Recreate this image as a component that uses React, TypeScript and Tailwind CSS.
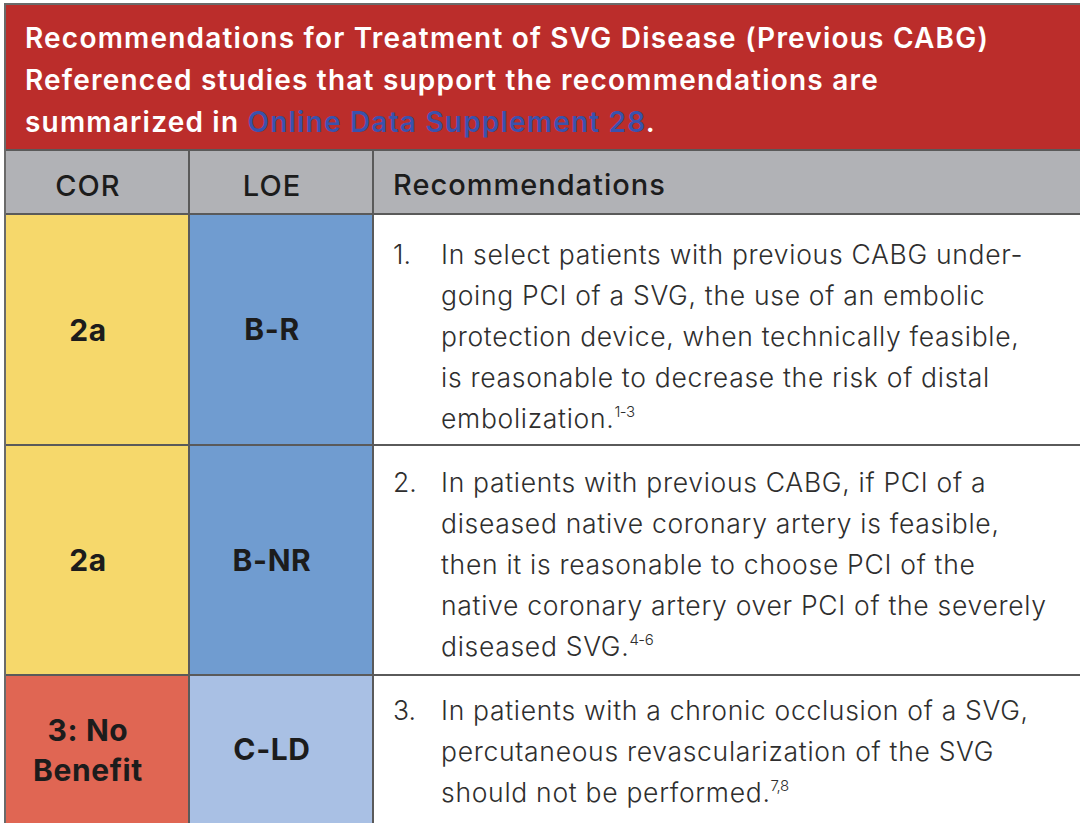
import React from 'react'

const rows = [
  {
    cor: ['2a'],
    corBg: 'bg-[#f6d86b]',
    loe: 'B-R',
    loeBg: 'bg-[#709cd0]',
    h: 'h-[231px]',
    pt: 'pt-[19px]',
    num: '1.',
    lines: [
      'In select patients with previous CABG under-',
      'going PCI of a SVG, the use of an embolic',
      'protection device, when technically feasible,',
      'is reasonable to decrease the risk of distal',
      'embolization.',
    ],
    sup: '1-3',
  },
  {
    cor: ['2a'],
    corBg: 'bg-[#f6d86b]',
    loe: 'B-NR',
    loeBg: 'bg-[#709cd0]',
    h: 'h-[230px]',
    pt: 'pt-[16px]',
    num: '2.',
    lines: [
      'In patients with previous CABG, if PCI of a',
      'diseased native coronary artery is feasible,',
      'then it is reasonable to choose PCI of the',
      'native coronary artery over PCI of the severely',
      'diseased SVG.',
    ],
    sup: '4-6',
  },
  {
    cor: ['3: No', 'Benefit'],
    corBg: 'bg-[#e06653]',
    loe: 'C-LD',
    loeBg: 'bg-[#a9c0e4]',
    h: 'h-[147px]',
    pt: 'pt-[14px]',
    num: '3.',
    lines: [
      'In patients with a chronic occlusion of a SVG,',
      'percutaneous revascularization of the SVG',
      'should not be performed.',
    ],
    sup: '7,8',
  },
]

export default function App() {
  return (
    <div className="bg-white w-[1080px] h-[824px] overflow-hidden pt-[3px] pl-[4px] font-['Inter','Liberation_Sans',sans-serif]">
      <div className="w-[1080px] border-l-2 border-t-2 border-[#6a6a6a]">
        {/* title bar */}
        <div className="bg-[#bb2d2b] h-[146px] pl-[19px] pt-[12px] text-white text-[28px] font-semibold leading-[42px] tracking-[1.2px] border-b-2 border-[#5a5a5a]">
          <div>Recommendations for Treatment of SVG Disease (Previous CABG)</div>
          <div>Referenced studies that support the recommendations are</div>
          <div>
            summarized in <span className="text-[#3a52ad]">Online Data Supplement 28</span>.
          </div>
        </div>

        {/* column headings */}
        <div className="grid grid-cols-[184px_184px_1fr] h-[64px] bg-[#b1b2b6] text-[#1c1c1c] text-[29px] font-medium tracking-[1px] border-b-2 border-[#5a5a5a]">
          <div className="flex items-center justify-center pr-[18px] pt-[8px] border-r-2 border-[#5a5a5a]">COR</div>
          <div className="flex items-center justify-center pr-[18px] pt-[8px] border-r-2 border-[#5a5a5a]">LOE</div>
          <div className="flex items-center pl-[19px] pt-[6px]">Recommendations</div>
        </div>

        {rows.map((r, i) => (
          <div
            key={i}
            className={`grid grid-cols-[184px_184px_1fr] ${r.h} ${i < rows.length - 1 ? 'border-b-2 border-[#5a5a5a]' : ''}`}
          >
            <div className={`${r.corBg} flex flex-col items-center justify-center pr-[18px] border-r-2 border-[#5a5a5a] text-[#1c1c1c] text-[30px] font-bold tracking-[0.6px] leading-[40px]`}>
              {r.cor.map((c) => (
                <span key={c}>{c}</span>
              ))}
            </div>
            <div className={`${r.loeBg} flex items-center justify-center pr-[18px] border-r-2 border-[#5a5a5a] text-[#1c1c1c] text-[30px] font-bold tracking-[0.6px]`}>
              {r.loe}
            </div>
            <div className={`bg-white flex ${r.pt} pl-[19px] text-[#2e2e2e] text-[26.5px] font-light leading-[41px]`}>
              <div className="w-[48px] shrink-0">{r.num}</div>
              <div className="tracking-[0.7px]">
                {r.lines.map((l, j) => (
                  <div key={j} className="whitespace-nowrap">
                    {l}
                    {j === r.lines.length - 1 && (
                      <sup className="text-[15px] relative -top-[11px] tracking-[-0.5px]">{r.sup}</sup>
                    )}
                  </div>
                ))}
              </div>
            </div>
          </div>
        ))}
      </div>
    </div>
  )
}
